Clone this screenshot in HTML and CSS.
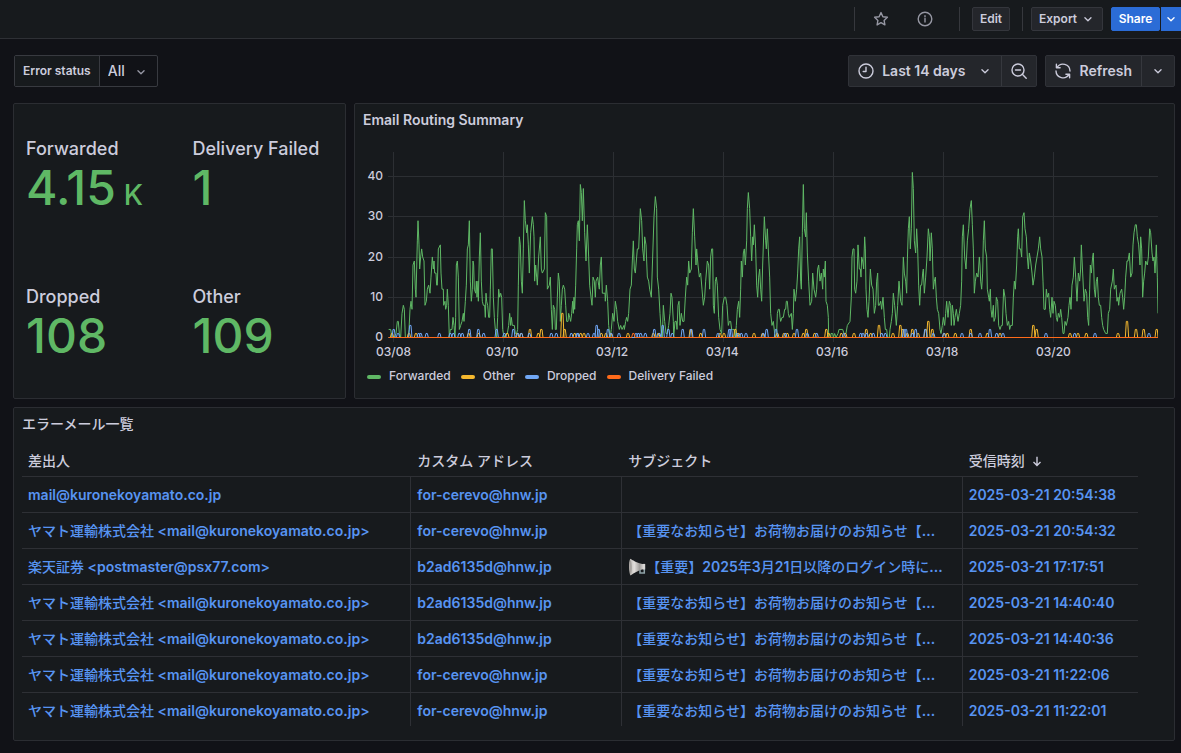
FILE: index.html
```html
<!DOCTYPE html>
<html lang="ja">
<head>
<meta charset="utf-8">
<title>Email Routing</title>
<link rel="stylesheet" href="styles.css">
</head>
<body>
<svg class="sprite" aria-hidden="true">
  <symbol id="chevron" viewBox="0 0 16 16"><path d="M4.500 6.500 8 10l3.500-3.500"/></symbol>
</svg>
<header class="topbar">
  <span class="divider"></span>
  <button class="icon-button" aria-label="Mark as favorite">
    <svg class="icon" viewBox="0 0 16 16"><path d="M8 1.600 9.900 5.700l4.500.6-3.300 3.100.8 4.500L8 11.700l-3.900 2.200.8-4.500L1.600 6.300l4.500-.6z"/></svg>
  </button>
  <button class="icon-button info" aria-label="Info">
    <svg class="icon" viewBox="0 0 16 16"><circle cx="8" cy="8" r="6.800"/><path d="M8 7.500v3.500M8 4.800v.9"/></svg>
  </button>
  <span class="divider"></span>
  <button class="button edit">Edit</button>
  <span class="divider"></span>
  <button class="button export">Export <svg class="chevron"><use href="#chevron"/></svg></button>
  <div class="share-group">
    <button class="button primary">Share</button>
    <button class="button primary more" aria-label="Share options"><svg class="chevron"><use href="#chevron"/></svg></button>
  </div>
</header>

<main class="page">
  <div class="controls">
    <div class="variable">
      <label for="status">Error status</label>
      <div class="select-wrap">
        <select id="status"><option>All</option></select>
        <svg class="chevron"><use href="#chevron"/></svg>
      </div>
    </div>
    <div class="time-tools">
      <div class="group">
        <button class="tool range">
          <svg class="icon" viewBox="0 0 16 16"><circle cx="8" cy="8" r="7"/><path d="M8 4.300V8.500H5.200"/></svg>
          <span>Last 14 days</span>
          <svg class="chevron"><use href="#chevron"/></svg>
        </button>
        <button class="tool zoom" aria-label="Zoom out">
          <svg class="icon" viewBox="0 0 16 16"><circle cx="7" cy="7" r="6"/><path d="M4.500 7h5M11.300 11.300 15.200 15.200"/></svg>
        </button>
      </div>
      <div class="group">
        <button class="tool refresh">
          <svg class="icon" viewBox="0 0 16 16"><path d="M1.400 1.200v3.600h3.700M2 4.600A7 7 0 0 1 15 8M14.600 14.800v-3.600h-3.700M14 11.400A7 7 0 0 1 1 8"/></svg>
          <span>Refresh</span>
        </button>
        <button class="tool interval" aria-label="Refresh interval"><svg class="chevron"><use href="#chevron"/></svg></button>
      </div>
    </div>
  </div>

  <div class="panels">
    <section class="panel stats">
      <div class="stat"><h3>Forwarded</h3><p>4.15<small>K</small></p></div>
      <div class="stat"><h3>Delivery Failed</h3><p>1</p></div>
      <div class="stat"><h3>Dropped</h3><p>108</p></div>
      <div class="stat"><h3>Other</h3><p>109</p></div>
    </section>

    <section class="panel chart-panel">
      <h2>Email Routing Summary</h2>
      <div class="plot-row">
        <div class="y-axis"><span>40</span><span>30</span><span>20</span><span>10</span><span>0</span></div>
        <svg class="plot" viewBox="12 21 2310 570" preserveAspectRatio="none" role="img" aria-label="Email Routing Summary">
          <path class="grid-line" d="M12 94.500H2322M12 214.500H2322M12 337.500H2322M12 457.500H2322M28.500 21V591M358.500 21V591M688.500 21V591M1018.500 21V591M1348.500 21V591M1678.500 21V591M2008.500 21V591"/>
          <g transform="translate(0 577.500) scale(1 -12.080)">
            <path id="forwarded" class="series forwarded"/>
            <path id="other" class="series other"/>
            <path id="dropped" class="series dropped"/>
            <path id="failed" class="series failed"/>
          </g>
        </svg>
      </div>
      <div class="x-axis"><span>03/08</span><span>03/10</span><span>03/12</span><span>03/14</span><span>03/16</span><span>03/18</span><span>03/20</span></div>
      <ul class="legend">
        <li><i class="swatch green"></i>Forwarded</li>
        <li><i class="swatch yellow"></i>Other</li>
        <li><i class="swatch blue"></i>Dropped</li>
        <li><i class="swatch orange"></i>Delivery Failed</li>
      </ul>
    </section>

    <section class="panel table-panel">
      <h2><span class="kana">エラーメール一覧</span></h2>
      <div class="table-view">
        <table>
          <colgroup><col class="c-from"><col class="c-address"><col class="c-subject"><col class="c-time"></colgroup>
          <thead>
            <tr><th>差出人</th><th>カスタム アドレス</th><th>サブジェクト</th><th>受信時刻 <svg class="sort" viewBox="0 0 16 16"><path d="M8 3v10M4 9.200 8 13.200l4-4"/></svg></th></tr>
          </thead>
          <tbody>
            <tr><td><a href="#">mail@kuronekoyamato.co.jp</a></td><td><a href="#">for-cerevo@hnw.jp</a></td><td></td><td><a href="#">2025-03-21 20:54:38</a></td></tr>
            <tr><td><a href="#"><span class="kana">ヤマト運輸株式会社</span> &lt;mail@kuronekoyamato.co.jp&gt;</a></td><td><a href="#">for-cerevo@hnw.jp</a></td><td><a href="#"><span class="kana">【重要なお知らせ】お荷物お届けのお知らせ【</span>...</a></td><td><a href="#">2025-03-21 20:54:32</a></td></tr>
            <tr><td><a href="#"><span class="kana">楽天証券</span> &lt;postmaster@psx77.com&gt;</a></td><td><a href="#">b2ad6135d@hnw.jp</a></td><td><a href="#"><svg class="megaphone" viewBox="0 0 18 18"><defs><linearGradient id="horn" x1="0" y1="0" x2="1" y2="0"><stop offset="0" stop-color="#b5b2ae"/><stop offset=".35" stop-color="#e2dfdc"/><stop offset=".7" stop-color="#a19e9b"/><stop offset="1" stop-color="#dedcda"/></linearGradient></defs><path fill="none" stroke="#8fa3a8" stroke-width="1.500" d="M12 11.500v3.500h4.300V9"/><path fill="url(#horn)" d="M2.300.8C4.500 2 8 4.800 16 6.300v4.700C11 12 6 15 2.500 17.600 1 15 .3 4 2.300.8z"/><path fill="#a5a19d" d="M2.500 1.800c1.600 3 1.900 11.500.2 14.900C1.500 14 1.200 4.500 2.500 1.800z"/><path fill="#d9d8d6" d="M14.900 5.900h2.300v5.600h-2.300z"/></svg><span class="kana">【重要】</span>2025<span class="kana">年</span>3<span class="kana">月</span>21<span class="kana">日以降のログイン時に</span>...</a></td><td><a href="#">2025-03-21 17:17:51</a></td></tr>
            <tr><td><a href="#"><span class="kana">ヤマト運輸株式会社</span> &lt;mail@kuronekoyamato.co.jp&gt;</a></td><td><a href="#">b2ad6135d@hnw.jp</a></td><td><a href="#"><span class="kana">【重要なお知らせ】お荷物お届けのお知らせ【</span>...</a></td><td><a href="#">2025-03-21 14:40:40</a></td></tr>
            <tr><td><a href="#"><span class="kana">ヤマト運輸株式会社</span> &lt;mail@kuronekoyamato.co.jp&gt;</a></td><td><a href="#">b2ad6135d@hnw.jp</a></td><td><a href="#"><span class="kana">【重要なお知らせ】お荷物お届けのお知らせ【</span>...</a></td><td><a href="#">2025-03-21 14:40:36</a></td></tr>
            <tr><td><a href="#"><span class="kana">ヤマト運輸株式会社</span> &lt;mail@kuronekoyamato.co.jp&gt;</a></td><td><a href="#">for-cerevo@hnw.jp</a></td><td><a href="#"><span class="kana">【重要なお知らせ】お荷物お届けのお知らせ【</span>...</a></td><td><a href="#">2025-03-21 11:22:06</a></td></tr>
            <tr><td><a href="#"><span class="kana">ヤマト運輸株式会社</span> &lt;mail@kuronekoyamato.co.jp&gt;</a></td><td><a href="#">for-cerevo@hnw.jp</a></td><td><a href="#"><span class="kana">【重要なお知らせ】お荷物お届けのお知らせ【</span>...</a></td><td><a href="#">2025-03-21 11:22:01</a></td></tr>
          </tbody>
        </table>
      </div>
    </section>
  </div>
</main>
<script src="chart.js"></script>
</body>
</html>
```
FILE: styles.css
```css
* { box-sizing: border-box; }
body, h2, h3, p, ul { margin: 0; }
body {
  background: #111217;
  color: #ccccdc;
  font: 400 14px/20px Inter, "Noto Sans CJK JP", sans-serif;
}
button, select { font: inherit; color: inherit; }
svg { fill: none; stroke: currentColor; }
.sprite { display: none; }
.kana { font-weight: 500; }
.icon { width: 16px; height: 16px; stroke-width: 1.4; stroke-linecap: round; stroke-linejoin: round; }
.chevron { width: 14px; height: 14px; stroke-width: 1.5; stroke-linecap: round; stroke-linejoin: round; }

.topbar {
  display: flex;
  align-items: center;
  justify-content: flex-end;
  height: 39px;
  background: #171a1d;
  border-bottom: 1px solid #2e3035;
}
.divider { width: 1px; height: 24px; background: #36383d; }
.icon-button {
  display: flex;
  align-items: center;
  justify-content: center;
  width: 32px;
  height: 32px;
  margin-left: 10px;
  padding: 0;
  border: 0;
  background: none;
  color: #9697a3;
}
.icon-button.info { margin-left: 12px; margin-right: 18px; }
.button {
  display: flex;
  align-items: center;
  justify-content: center;
  gap: 4px;
  height: 24px;
  padding: 0 7px;
  border: 1px solid #34363c;
  border-radius: 2px;
  background: #24262b;
  font-size: 12px;
  font-weight: 600;
}
.edit { width: 38px; margin: 0 12px; }
.export { width: 72px; margin: 0 8px; }
.share-group { display: flex; gap: 1px; }
.primary { width: 49px; border-color: #2b6cd6; background: #2b6cd6; color: #fff; }
.more { width: 20px; padding: 0; border-radius: 0; }

.page { padding: 16px 6px 12px 13px; }
.controls { display: flex; justify-content: space-between; margin-bottom: 16px; }
.variable { display: flex; height: 32px; margin-left: 1px; border: 1px solid #383a40; border-radius: 2px; }
.variable label {
  padding: 0 8px;
  background: #171a1d;
  border-right: 1px solid #383a40;
  font-size: 12px;
  font-weight: 600;
  line-height: 30px;
}
.select-wrap { position: relative; width: 57px; }
.select-wrap select {
  width: 100%;
  height: 30px;
  padding: 0 8px;
  border: 0;
  background: none;
  font-weight: 500;
  appearance: none;
}
.select-wrap .chevron { position: absolute; right: 9px; top: 9px; pointer-events: none; color: #9899a6; }
.time-tools { display: flex; gap: 8px; }
.group { display: flex; height: 32px; border: 1px solid #303238; border-radius: 2px; background: #24262b; }
.tool {
  display: flex;
  align-items: center;
  justify-content: center;
  padding: 0;
  border: 0;
  background: none;
  font-weight: 600;
}
.tool + .tool { border-left: 1px solid #36383e; }
.tool span { margin-left: 8px; }
.range { padding: 0 9px; }
.range .chevron { margin-left: 12px; }
.zoom { width: 35px; }
.refresh { padding: 0 9px; }
.refresh span { margin-left: 9px; }
.interval { width: 33px; }

.panels { display: grid; grid-template-columns: 333fr 821fr; gap: 8px; }
.panel { border: 1px solid #2b2d32; border-radius: 2px; background: #171a1d; }
.panel h2 { padding: 6px 8px; font-size: 14px; font-weight: 600; line-height: 20px; }
.stats { display: grid; grid-template-columns: 1fr 1fr; grid-template-rows: 1fr 1fr; gap: 2px; }
.stat { padding: 33px 0 0 12px; }
.stat h3 { font-size: 18px; font-weight: 500; line-height: 24px; white-space: nowrap; }
.stat p { color: #5fb865; font-size: 48px; font-weight: 500; line-height: 54px; }
.stat small { margin-left: 8px; font-size: 28px; font-weight: 500; }

.plot-row { display: flex; height: 193px; margin-top: 16px; padding-right: 16px; }
.y-axis {
  display: flex;
  flex-direction: column;
  justify-content: space-between;
  width: 33px;
  padding: 16px 5px 0 0;
  font-size: 12px;
  font-weight: 500;
  line-height: 16px;
  text-align: right;
}
.plot { flex: 1; min-width: 0; height: 190px; }
.plot path { vector-effect: non-scaling-stroke; }
.grid-line { stroke: #2c2f33; shape-rendering: crispEdges; }
.series { stroke-width: 1; stroke-linejoin: round; }
.forwarded { stroke: #5fb865; }
.other { stroke: #f5b82e; }
.dropped { stroke: #70a7f5; }
.failed { stroke: #ff6b1a; }
.x-axis {
  display: grid;
  grid-template-columns: repeat(7, 1fr);
  margin: 0 28px 0 21px;
  font-size: 12px;
  font-weight: 500;
  line-height: 14px;
}
.legend {
  display: flex;
  gap: 10px;
  margin: 9px 0 14px;
  padding: 0 12px;
  list-style: none;
  font-size: 12px;
  font-weight: 500;
  line-height: 16px;
}
.legend li { display: flex; align-items: center; gap: 8px; }
.swatch { width: 14px; height: 4px; margin-top: 2px; border-radius: 2px; }
.green { background: #5fb865; }
.yellow { background: #f5b82e; }
.blue { background: #70a7f5; }
.orange { background: #ff6b1a; }

.table-panel { grid-column: 1 / -1; }
.table-view { height: 286px; margin: 0 36px 14px 8px; overflow: hidden; }
table { width: 100%; border-collapse: separate; border-spacing: 0; table-layout: fixed; }
.c-from { width: 34.8%; }
.c-address { width: 18.9%; }
.c-subject { width: 30.5%; }
.c-time { width: 15.8%; }
th, td { height: 36px; padding: 0 6px; border-bottom: 1px solid #2e3035; text-align: left; white-space: nowrap; }
th { height: 37px; padding-top: 6px; font-weight: 500; }
td + td { border-left: 1px solid #2e3035; }
th + th { padding-left: 7px; }
a { color: #5794f2; font-weight: 600; text-decoration: none; }
.sort { width: 14px; height: 14px; margin-left: 2px; stroke-width: 1.6; vertical-align: -2px; }
.megaphone { width: 18px; height: 18px; stroke: none; vertical-align: -4px; }
```
FILE: chart.js
```js
// Each pair is "time,count"; a time unit is a third of a plot pixel at base width.
const forwarded = `14,2 20,2 24,0 30,0 36,1 40,4 43,4 46,1 50,0 54,6 58,8 61,7 64,0 72,0 75,2 78,7 81,9 84,7 87,18 91,19 94,12 96,10 100,24 102,29 105,23 107,17 110,20 113,22 116,20 120,19 123,8 127,9 130,12 134,13 138,11 141,15 145,20 148,17 150,19 152,16 156,16 158,13 160,13 163,22 169,23 171,16 174,12 178,12 179,8 183,9 185,7 188,8 190,12 193,8 196,0 199,2 204,2 207,5 210,3 213,0 215,5 217,18 220,19 223,15 226,2 230,3 234,4 238,6 240,4 244,9 247,13 250,22 253,23 256,29 259,14 262,9 265,12 267,19 269,18 271,12 275,11 277,14 279,10 282,14 283,9 286,20 289,26 292,14 295,9 298,8 302,8 304,5 306,11 308,9 311,8 314,5 317,5 319,12 322,22 325,22 328,10 331,5 334,2 338,0 341,5 344,12 347,10 350,11 353,10 356,2 360,0 366,1 370,1 374,3 377,6 380,3 382,5 385,3 391,3 394,1 398,1 401,2 403,13 406,25 409,23 412,14 415,11 418,22 421,34 424,29 428,26 430,28 433,23 436,16 440,26 445,30 448,28 450,25 452,14 455,18 458,15 460,13 464,20 469,25 472,17 475,16 481,17 484,31 488,30 490,12 496,13 499,15 502,7 505,2 508,8 512,7 514,2 517,2 520,10 523,16 526,14 529,4 532,8 535,12 538,13 542,12 545,8 548,4 552,4 554,6 557,5 560,4 563,6 566,9 568,6 570,10 572,7 575,13 578,22 580,28 583,29 586,24 589,38 592,36 595,29 598,37
602,26 606,19 610,28 614,20 617,13 621,10 624,8 627,15 631,14 634,10 636,14 641,15 644,13 646,12 649,18 652,20 655,11 663,11 664,9 667,13 671,9 674,3 678,0 682,2 686,6 690,4 694,9 698,7 701,4 706,2 710,3 714,2 720,3 721,2 725,4 728,5 731,4 734,6 738,12 742,13 745,19 748,24 751,17 754,16 758,20 760,22 764,22 769,32 773,29 776,22 780,19 782,25 786,23 790,15 794,14 797,12 802,10 806,20 810,30 814,35 818,32 820,15 824,12 828,6 832,1 835,0 838,8 842,4 846,1 850,1 854,3 858,6 861,11 864,10 868,4 869,0 873,4 877,4 879,2 882,8 885,9 888,3 892,6 896,4 900,4 904,10 908,15 911,13 914,19 917,16 922,17 925,26 928,32 932,25 936,18 938,22 942,18 946,15 950,16 954,12 958,8 962,10 965,14 970,19 974,18 977,12 980,20 983,22 986,22 988,8 991,6 994,14 997,15 1000,13 1004,5 1008,2 1013,1 1016,8 1021,10 1025,10 1029,8 1033,3 1036,4 1040,4 1043,2 1046,2 1050,2 1054,0 1057,3 1060,7 1064,9 1067,5 1070,12 1072,19 1075,15 1078,21 1081,22 1084,18 1088,24 1090,32 1093,36 1097,32 1100,25 1103,19 1106,25 1108,23 1111,28 1115,22 1118,13 1121,10 1124,15 1127,17 1130,12 1133,9 1136,18 1141,30 1145,24 1147,22 1150,27 1154,20
1157,15 1160,6 1164,3 1168,4 1172,1 1174,0 1178,1 1180,6 1183,7 1186,7 1188,5 1190,4 1194,5 1198,5 1202,7 1205,7 1207,9 1210,9 1213,6 1216,5 1222,6 1225,2 1228,6 1230,12 1234,9 1238,12 1241,16 1244,22 1247,25 1250,14 1252,12 1255,26 1258,38 1261,27 1265,25 1267,31 1270,21 1274,14 1278,8 1283,9 1286,16 1290,12 1295,10 1298,12 1301,17 1304,18 1308,14 1312,16 1316,12 1318,17 1321,15 1324,19 1326,9 1330,8 1333,5 1334,0 1340,0 1341,1 1346,1 1348,0 1352,1 1356,0 1362,1 1365,2 1376,2 1380,1 1386,1 1390,3 1398,4 1402,10 1404,20 1407,22 1410,22 1412,12 1415,11 1419,14 1422,23 1426,17 1429,17 1431,15 1433,20 1436,19 1439,17 1442,25 1444,22 1446,12 1449,7 1452,5 1455,9 1459,17 1463,13 1467,12 1471,6 1475,8 1478,14 1481,16 1483,8 1486,8 1490,9 1493,7 1497,10 1501,5 1504,2 1508,2 1511,0 1516,0 1518,2 1522,4 1525,6 1528,11 1532,8 1537,3 1541,8 1545,14 1550,9 1554,8 1558,20 1561,16 1565,14 1568,11 1570,19 1573,27 1576,30 1579,22 1582,27 1585,41 1588,37 1591,24 1595,21 1598,27 1601,22 1604,13 1607,8 1610,13 1613,13 1616,16 1618,17 1621,11 1625,15 1629,20 1633,27 1636,25 1638,19 1642,26 1645,22 1648,12 1651,14 1654,15 1657,10 1660,7 1664,6 1668,2 1671,1 1675,3 1678,5 1682,3 1685,6 1688,9 1692,5 1696,9 1700,8 1702,3 1705,8 1708,6 1710,3 1713,5 1717,7 1722,4 1726,6 1730,8 1733,14 1735,25 1738,28
1742,20 1746,17 1750,24 1754,27 1758,32 1762,34 1765,28 1768,22 1771,11 1774,14 1778,16 1782,15 1786,20 1788,18 1790,14 1793,12 1796,16 1798,24 1801,29 1804,22 1808,20 1810,12 1814,10 1816,9 1819,12 1821,7 1824,5 1828,8 1830,4 1834,5 1837,10 1841,9 1844,3 1848,2 1852,3 1855,3 1859,12 1863,10 1866,6 1870,3 1874,4 1877,2 1880,3 1885,3 1888,10 1891,14 1894,12 1898,18 1901,25 1903,27 1906,22 1910,22 1913,20 1916,30 1920,31 1923,27 1927,25 1930,20 1933,17 1936,21 1940,19 1944,16 1947,13 1951,15 1955,18 1959,20 1963,22 1967,25 1970,22 1974,20 1977,14 1980,7 1984,7 1987,12 1990,10 1994,11 1997,7 2000,5 2004,10 2007,6 2010,9 2014,8 2017,5 2020,4 2023,6 2027,5 2030,7 2033,5 2037,1 2040,1 2043,4 2047,3 2052,5 2055,8 2058,10 2061,7 2064,13 2068,15 2071,20 2075,15 2079,9 2083,16 2087,14 2090,17 2092,23 2096,16 2100,9 2104,12 2108,11 2111,5 2114,3 2117,12 2119,18 2122,16 2126,20 2128,21 2131,12 2134,10 2137,14 2140,15 2143,10 2146,8 2150,8 2153,5 2156,3 2159,2 2165,1 2170,1 2173,6 2177,7 2180,12 2185,14 2188,17 2191,12 2196,13 2199,9 2202,10 2204,8 2208,11 2213,12 2216,10 2219,7 2222,10 2225,15 2229,19 2232,19 2236,21 2240,15 2244,16 2247,23 2250,26 2254,28 2257,28 2260,25 2264,23 2268,18 2270,25 2273,22 2276,10 2279,14 2282,16 2285,19 2290,18 2293,20 2297,27 2300,26 2304,21 2307,19 2310,20 2313,16 2317,23 2320,15 2322,6`;

// Sparse series: only the non-zero readings are listed.
const other = `24,1 75,1 96,1 254,1 284,1 370,1 400,1 412,1 438,2 463,1 472,2 535,6 542,2 572,1 590,1 600,1 652,1 666,1 680,1 732,1 808,1 823,1 920,2 950,1 1008,1 1020,1 1054,2 1064,1 1110,1 1136,1 1180,1 1200,1 1210,1 1230,1 1258,1 1267,2 1292,1 1327,2 1334,1 1372,1 1384,1 1410,1 1447,2 1460,1 1485,3 1527,1 1549,3 1556,2 1570,1 1585,2 1602,1 1625,2 1633,4 1645,2 1681,1 1690,1 1714,1 1760,2 1810,1 1848,1 1948,3 1958,2 2058,1 2082,1 2107,1 2202,1 2229,4 2256,2 2279,2 2318,2`;
const dropped = `29,2 42,1 79,3 104,1 110,1 128,1 166,1 199,1 208,1 226,1 235,1 256,2 283,2 299,1 338,2 361,1 388,2 402,1 412,1 436,1 502,1 517,1 562,1 580,1 582,1 612,1 630,1 638,3 644,2 672,2 682,1 705,1 756,1 763,1 770,1 784,1 811,2 826,1 836,3 853,2 865,1 896,2 922,2 960,2 1002,1 1036,2 1041,2 1060,1 1072,1 1086,1 1138,1 1148,2 1176,2 1204,1 1239,2 1270,1 1298,1 1380,1 1430,1 1437,1 1448,1 1468,1 1493,1 1504,1 1560,2 1566,2 1585,1 1595,2 1624,2 1648,1 1680,1 1734,1 1760,1 1788,1 1818,2 1838,1 1857,1 1986,1 2072,1 2133,1 2295,1`;
const failed = `748,1`;

const pairs = text => text.trim().split(/\s+/).map(p => p.split(',').map(Number));
const draw = (id, d) => document.getElementById(id).setAttribute('d', d);
const spikes = text =>
  'M14 0' + pairs(text).map(([x, v]) => `L${x - 5} 0L${x - 2} ${v}L${x + 2} ${v}L${Math.min(x + 5, 2322)} 0`).join('') + 'L2322 0';

draw('forwarded', 'M' + pairs(forwarded).map(p => p.join(' ')).join('L'));
draw('other', spikes(other));
draw('dropped', spikes(dropped));
draw('failed', spikes(failed));
```
